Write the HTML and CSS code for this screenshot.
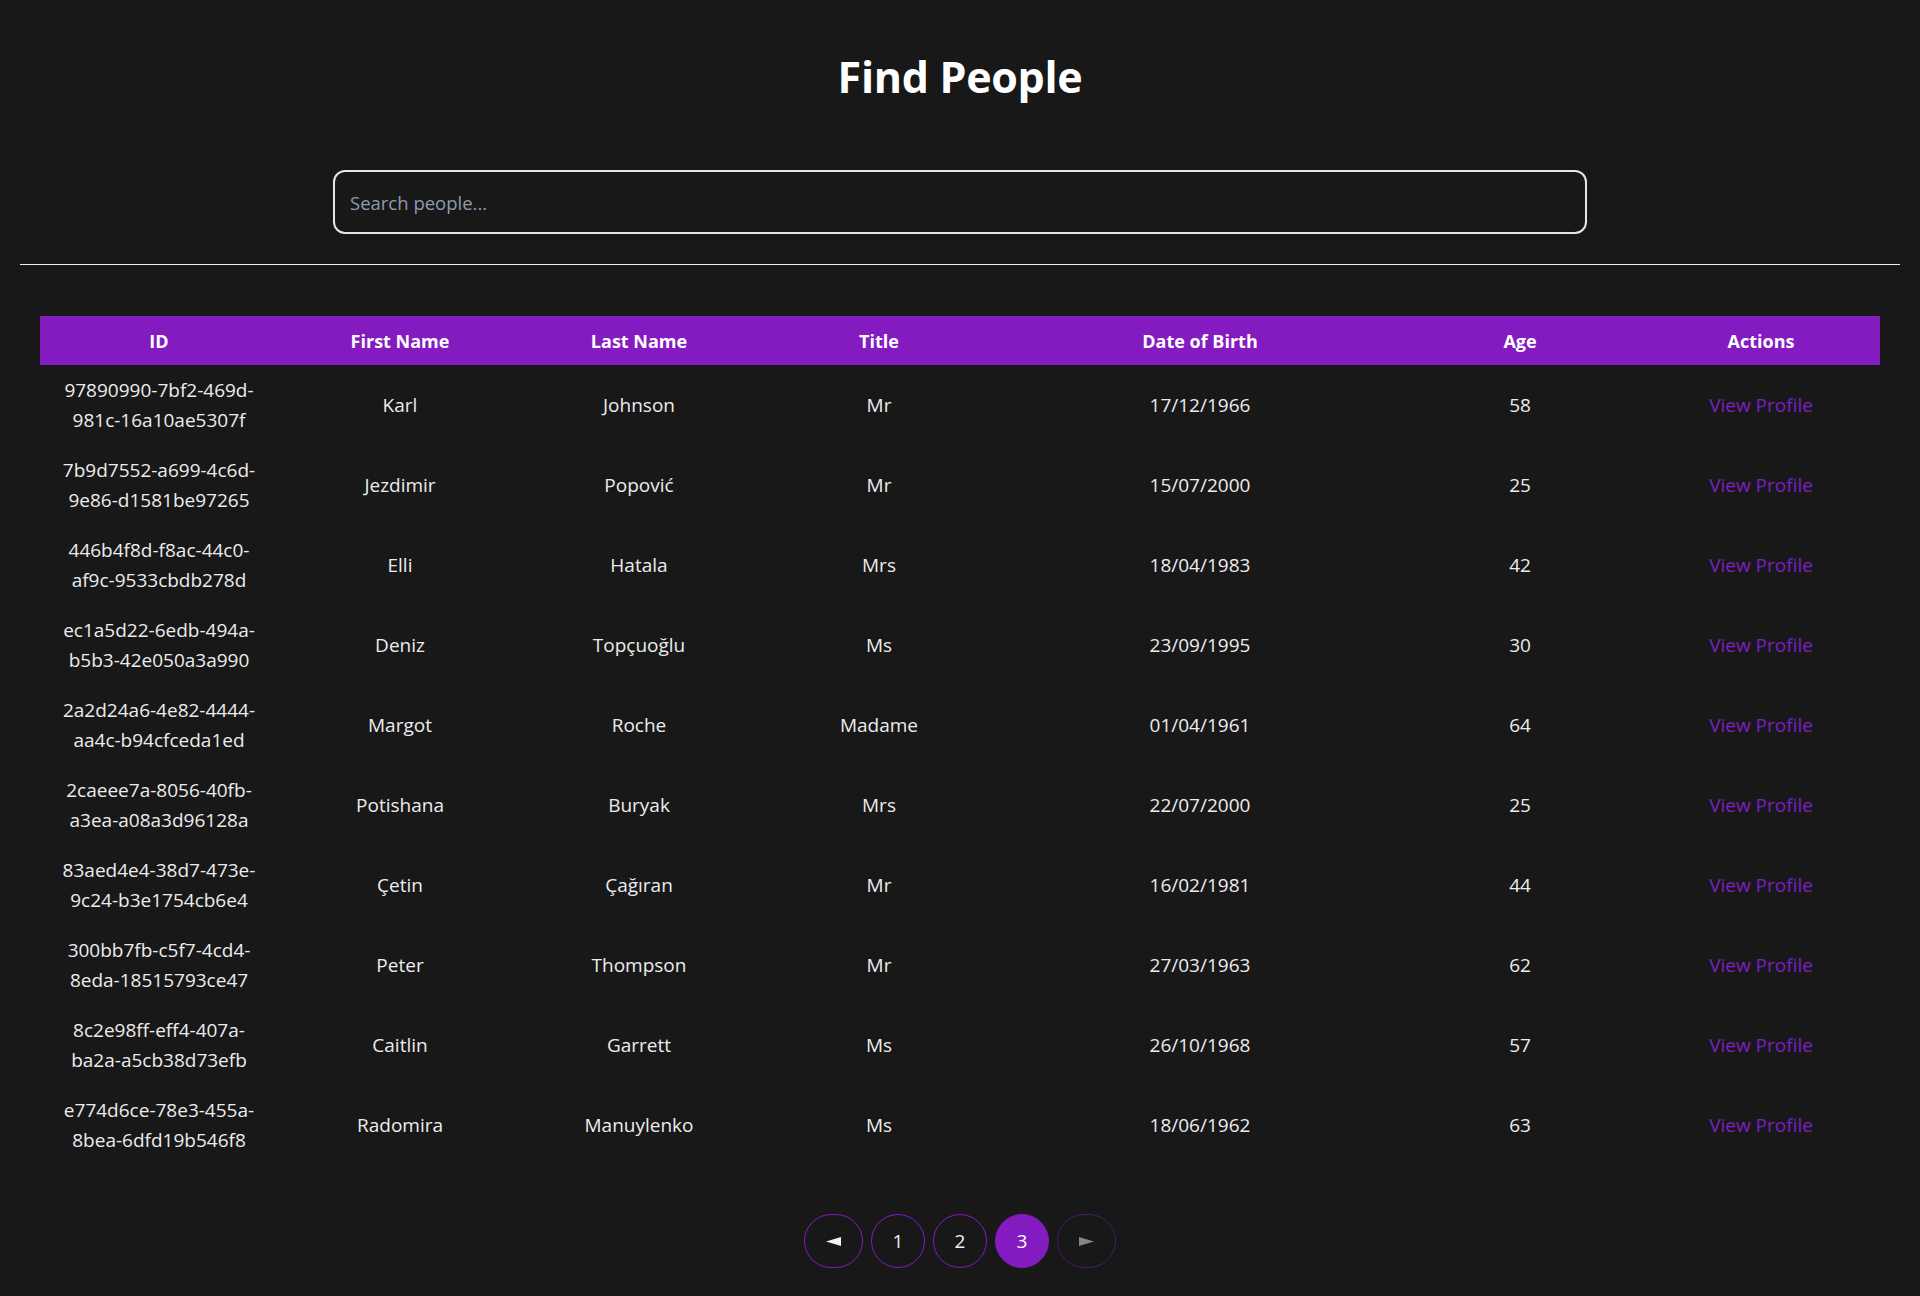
FILE: index.html
```html
<!DOCTYPE html>
<html lang="en">
<head>
<meta charset="utf-8">
<title>Find People</title>
<link rel="stylesheet" href="styles.css">
</head>
<body>
<div class="page">
  <h1 class="title">Find People</h1>
  <div class="search-wrap">
    <input class="search" type="text" placeholder="Search people...">
  </div>
  <hr class="divider">
  <table class="people">
    <colgroup>
      <col class="c-id"><col class="c-first"><col class="c-last"><col class="c-title"><col class="c-dob"><col class="c-age"><col class="c-actions">
    </colgroup>
    <thead>
      <tr><th>ID</th><th>First Name</th><th>Last Name</th><th>Title</th><th>Date of Birth</th><th>Age</th><th>Actions</th></tr>
    </thead>
    <tbody>
      <tr><td>97890990-7bf2-469d-981c-16a10ae5307f</td><td>Karl</td><td>Johnson</td><td>Mr</td><td>17/12/1966</td><td>58</td><td><a class="link" href="#">View Profile</a></td></tr>
      <tr><td>7b9d7552-a699-4c6d-9e86-d1581be97265</td><td>Jezdimir</td><td>Popović</td><td>Mr</td><td>15/07/2000</td><td>25</td><td><a class="link" href="#">View Profile</a></td></tr>
      <tr><td>446b4f8d-f8ac-44c0-af9c-9533cbdb278d</td><td>Elli</td><td>Hatala</td><td>Mrs</td><td>18/04/1983</td><td>42</td><td><a class="link" href="#">View Profile</a></td></tr>
      <tr><td>ec1a5d22-6edb-494a-b5b3-42e050a3a990</td><td>Deniz</td><td>Topçuoğlu</td><td>Ms</td><td>23/09/1995</td><td>30</td><td><a class="link" href="#">View Profile</a></td></tr>
      <tr><td>2a2d24a6-4e82-4444-aa4c-b94cfceda1ed</td><td>Margot</td><td>Roche</td><td>Madame</td><td>01/04/1961</td><td>64</td><td><a class="link" href="#">View Profile</a></td></tr>
      <tr><td>2caeee7a-8056-40fb-a3ea-a08a3d96128a</td><td>Potishana</td><td>Buryak</td><td>Mrs</td><td>22/07/2000</td><td>25</td><td><a class="link" href="#">View Profile</a></td></tr>
      <tr><td>83aed4e4-38d7-473e-9c24-b3e1754cb6e4</td><td>Çetin</td><td>Çağıran</td><td>Mr</td><td>16/02/1981</td><td>44</td><td><a class="link" href="#">View Profile</a></td></tr>
      <tr><td>300bb7fb-c5f7-4cd4-8eda-18515793ce47</td><td>Peter</td><td>Thompson</td><td>Mr</td><td>27/03/1963</td><td>62</td><td><a class="link" href="#">View Profile</a></td></tr>
      <tr><td>8c2e98ff-eff4-407a-ba2a-a5cb38d73efb</td><td>Caitlin</td><td>Garrett</td><td>Ms</td><td>26/10/1968</td><td>57</td><td><a class="link" href="#">View Profile</a></td></tr>
      <tr><td>e774d6ce-78e3-455a-8bea-6dfd19b546f8</td><td>Radomira</td><td>Manuylenko</td><td>Ms</td><td>18/06/1962</td><td>63</td><td><a class="link" href="#">View Profile</a></td></tr>
    </tbody>
  </table>
  <nav class="pager">
    <button class="pg pg-arrow" aria-label="Previous"><svg class="arrow" width="15" height="9" viewBox="0 0 15 9"><polygon points="0,4.5 15,0 15,9"/></svg></button>
    <button class="pg">1</button>
    <button class="pg">2</button>
    <button class="pg pg-active">3</button>
    <button class="pg pg-arrow pg-disabled" aria-label="Next"><svg class="arrow" width="15" height="9" viewBox="0 0 15 9"><polygon points="15,4.5 0,0 0,9"/></svg></button>
  </nav>
</div>
</body>
</html>
```
FILE: styles.css
```css
html, body {
  margin: 0;
  padding: 0;
  background: #181818;
}
body {
  font-family: "Open Sans", "Noto Sans", "DejaVu Sans", sans-serif;
  color: #ececec;
}
.page {
  padding: 20px;
  display: flex;
  flex-direction: column;
  align-items: center;
}
.title {
  margin: 30px 0 0;
  font-size: 43px;
  line-height: 54px;
  font-weight: 700;
  color: #ffffff;
  letter-spacing: -0.3px;
}
.search-wrap {
  margin-top: 66px;
  width: 1254px;
}
.search {
  box-sizing: border-box;
  width: 100%;
  height: 64px;
  border: 2px solid #e6e6e6;
  border-radius: 12px;
  background: #181818;
  padding: 0 15px;
  font-family: inherit;
  font-size: 18.5px;
  color: #ececec;
  outline: none;
}
.search::placeholder {
  color: #8d9cb0;
}
.divider {
  align-self: stretch;
  margin: 30px 0 0;
  border: none;
  height: 1px;
  background: #f2f2f2;
}
.people {
  margin-top: 51px;
  width: 1840px;
  border-collapse: collapse;
  table-layout: fixed;
  font-size: 19px;
}
.c-id { width: 238px; }
.c-first { width: 244px; }
.c-last { width: 234px; }
.c-title { width: 246px; }
.c-dob { width: 396px; }
.c-age { width: 244px; }
.c-actions { width: 238px; }
.people th {
  background: #841bc1;
  color: #ffffff;
  font-weight: 700;
  height: 49px;
  padding: 0 10px;
  text-align: center;
  font-size: 18px;
}
.people td {
  height: 80px;
  box-sizing: border-box;
  padding: 10px 12px;
  line-height: 30px;
  text-align: center;
  vertical-align: middle;
}
.link {
  color: #7e1fc4;
  text-decoration: none;
}
.pager {
  margin-top: 49px;
  display: flex;
  gap: 8px;
}
.pg {
  box-sizing: border-box;
  width: 54px;
  height: 54px;
  border-radius: 27px;
  border: 1.5px solid #841bc1;
  background: transparent;
  color: #f0f0f0;
  font-family: inherit;
  font-size: 19px;
  padding: 0;
  display: flex;
  align-items: center;
  justify-content: center;
}
.pg-arrow {
  width: 59px;
}
.arrow {
  display: block;
  fill: #f4f4f4;
}
.pg-active {
  background: #841bc1;
  border-color: #841bc1;
  color: #ffffff;
}
.pg-disabled {
  border-color: #4a1a6b;
}
.pg-disabled .arrow {
  fill: #858585;
}
```
